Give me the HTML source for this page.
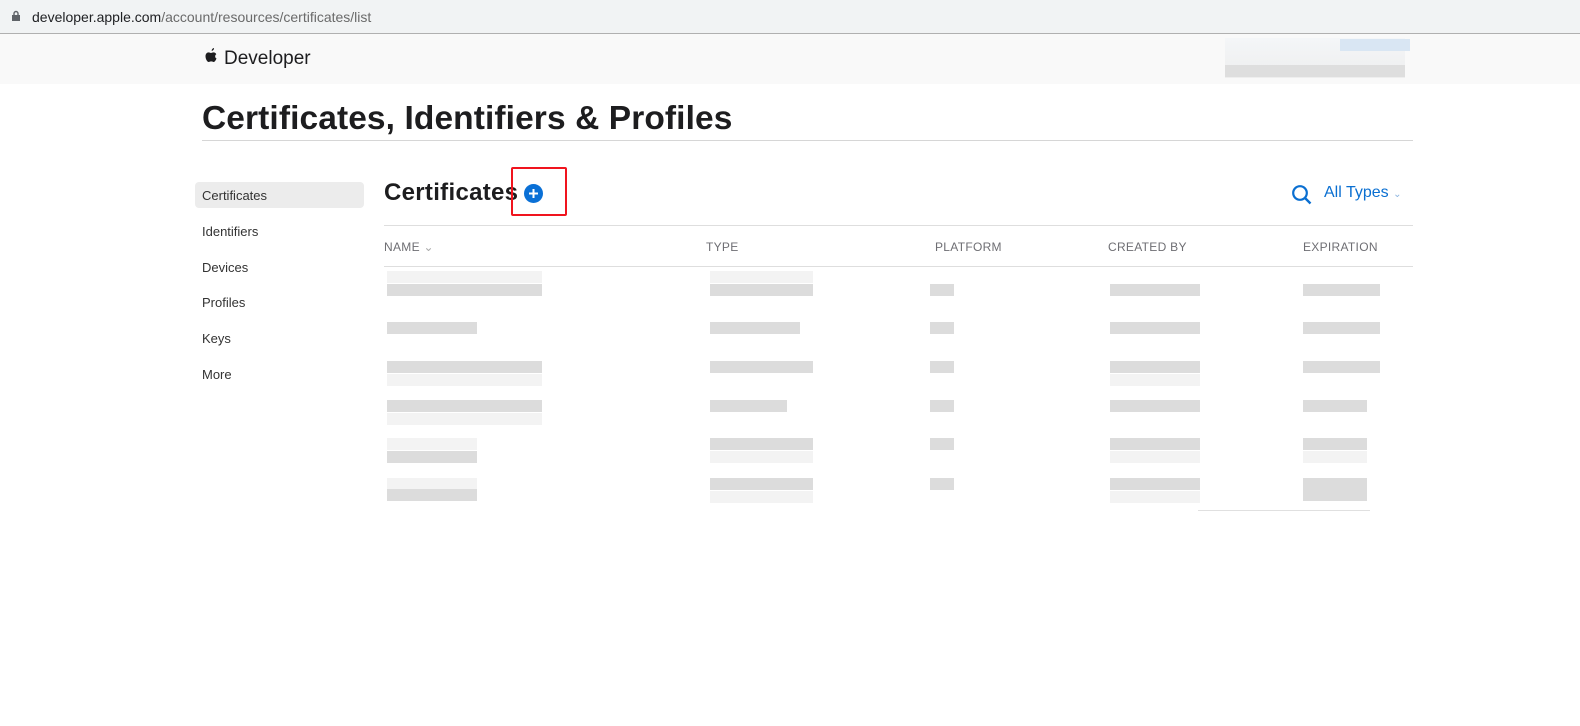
<!DOCTYPE html>
<html><head><style>
body{margin:0;width:1580px;height:726px;background:#fff;font-family:"Liberation Sans",sans-serif;position:relative;overflow:hidden}
.a{position:absolute}
.bar{position:absolute;height:12px;background:#dcdcdc}
.bar2{position:absolute;height:12px;background:#f3f3f3}
.hd{position:absolute;top:240px;font-size:12px;color:#6e6e73;letter-spacing:.3px}
.sb{position:absolute;left:202px;font-size:13px;color:#333}
</style></head><body>
<div class="a" style="left:0;top:0;width:1580px;height:33px;background:#f1f3f4"></div>
<div class="a" style="left:0;top:33px;width:1580px;height:1px;background:#b0b0b0"></div>
<svg class="a" style="left:11px;top:10px" width="10" height="12"><rect x="1" y="5" width="8" height="6" fill="#5f6368"/><path d="M3 5V3.5a2 2 0 0 1 4 0V5" stroke="#5f6368" stroke-width="1.4" fill="none"/></svg>
<div class="a" style="left:32px;top:9px;font-size:14px;color:#202124">developer.apple.com<span style="color:#6a6a6a">/account/resources/certificates/list</span></div>
<div class="a" style="left:0;top:34px;width:1580px;height:50px;background:#f9f9f9"></div>
<div class="a" style="left:1225px;top:38px;width:180px;height:40px;background:linear-gradient(#f4f6f8,#eee)"></div>
<div class="a" style="left:1225px;top:65px;width:180px;height:12px;background:#dedede"></div>
<div class="a" style="left:1340px;top:39px;width:70px;height:12px;background:#d9e6f3"></div>
<svg class="a" style="left:203px;top:46px" width="16" height="18" viewBox="0 0 16 18"><path d="M11 0c.2 1.3-.9 2.8-2.3 2.9C8.5 1.6 9.7.2 11 0zM13.3 6.2c-1.5.9-1.6 3.4.2 4.2-.4 1.3-1.6 3.6-2.8 3.6-.9 0-1.3-.6-2.5-.6s-1.6.6-2.5.6C4.2 14 2.5 11 2.5 8.3c0-2.4 1.5-3.9 3-3.9 1 0 1.8.6 2.5.6.6 0 1.6-.7 2.8-.6.6 0 1.7.3 2.5 1.8z" fill="#1d1d1f" transform="translate(0,2)"/></svg>
<div class="a" style="left:224px;top:48px;font-size:19px;color:#1d1d1f">Developer</div>
<div class="a" style="left:202px;top:100px;font-size:33.5px;font-weight:bold;color:#1d1d1f;letter-spacing:0.1px">Certificates, Identifiers &amp; Profiles</div>
<div class="a" style="left:202px;top:140px;width:1211px;height:1px;background:#d6d6d6"></div>
<div class="a" style="left:195px;top:182px;width:169px;height:26px;background:#ececec;border-radius:4px"></div>
<div class="sb" style="top:188px">Certificates</div>
<div class="sb" style="top:224px">Identifiers</div>
<div class="sb" style="top:260px">Devices</div>
<div class="sb" style="top:295px">Profiles</div>
<div class="sb" style="top:331px">Keys</div>
<div class="sb" style="top:367px">More</div>
<div class="a" style="left:384px;top:179px;font-size:24px;font-weight:bold;color:#1d1d1f;letter-spacing:0.3px">Certificates</div>
<svg class="a" style="left:524px;top:184px" width="19" height="19"><circle cx="9.5" cy="9.5" r="9.5" fill="#0a70d6"/><path d="M9.5 5v9M5 9.5h9" stroke="#fff" stroke-width="2"/></svg>
<div class="a" style="left:511px;top:167px;width:52px;height:45px;border:2px solid #f0141e;border-radius:2px"></div>
<svg class="a" style="left:1291px;top:184px" width="22" height="22"><circle cx="9" cy="9" r="6.8" stroke="#0a6fd1" stroke-width="2.2" fill="none"/><path d="M14 14l5.5 5.5" stroke="#0a6fd1" stroke-width="2.4"/></svg>
<div class="a" style="left:1324px;top:184px;font-size:16px;color:#0a6fd1">All Types <span style="font-size:10px;color:#8ab3df">&#8964;</span></div>
<div class="a" style="left:384px;top:225px;width:1029px;height:1px;background:#dedede"></div>
<div class="hd" style="left:384px">NAME <span style="color:#aaa">&#8964;</span></div>
<div class="hd" style="left:706px">TYPE</div>
<div class="hd" style="left:935px">PLATFORM</div>
<div class="hd" style="left:1108px">CREATED BY</div>
<div class="hd" style="left:1303px">EXPIRATION</div>
<div class="a" style="left:384px;top:266px;width:1029px;height:1px;background:#dedede"></div>
<div class="a" style="left:1198px;top:510px;width:172px;height:1px;background:#e0e0e0"></div>

<div class="bar2" style="left:387px;top:271px;width:155px"></div><div class="bar" style="left:387px;top:284px;width:155px"></div>
<div class="bar2" style="left:710px;top:271px;width:103px"></div><div class="bar" style="left:710px;top:284px;width:103px"></div>
<div class="bar" style="left:930px;top:284px;width:24px"></div><div class="bar" style="left:1110px;top:284px;width:90px"></div><div class="bar" style="left:1303px;top:284px;width:77px"></div>

<div class="bar" style="left:387px;top:322px;width:90px"></div><div class="bar" style="left:710px;top:322px;width:90px"></div>
<div class="bar" style="left:930px;top:322px;width:24px"></div><div class="bar" style="left:1110px;top:322px;width:90px"></div><div class="bar" style="left:1303px;top:322px;width:77px"></div>

<div class="bar" style="left:387px;top:361px;width:155px"></div><div class="bar" style="left:710px;top:361px;width:103px"></div>
<div class="bar" style="left:930px;top:361px;width:24px"></div><div class="bar" style="left:1110px;top:361px;width:90px"></div><div class="bar" style="left:1303px;top:361px;width:77px"></div>
<div class="bar2" style="left:387px;top:374px;width:155px"></div><div class="bar2" style="left:1110px;top:374px;width:90px"></div>

<div class="bar" style="left:387px;top:400px;width:155px"></div><div class="bar" style="left:710px;top:400px;width:77px"></div>
<div class="bar" style="left:930px;top:400px;width:24px"></div><div class="bar" style="left:1110px;top:400px;width:90px"></div><div class="bar" style="left:1303px;top:400px;width:64px"></div>
<div class="bar2" style="left:387px;top:413px;width:155px"></div>

<div class="bar2" style="left:387px;top:438px;width:90px"></div><div class="bar" style="left:387px;top:451px;width:90px"></div>
<div class="bar" style="left:710px;top:438px;width:103px"></div><div class="bar2" style="left:710px;top:451px;width:103px"></div>
<div class="bar" style="left:930px;top:438px;width:24px"></div><div class="bar" style="left:1110px;top:438px;width:90px"></div><div class="bar" style="left:1303px;top:438px;width:64px"></div>
<div class="bar2" style="left:1110px;top:451px;width:90px"></div><div class="bar2" style="left:1303px;top:451px;width:64px"></div>

<div class="bar2" style="left:387px;top:478px;width:90px"></div><div class="bar" style="left:387px;top:489px;width:90px"></div>
<div class="bar" style="left:710px;top:478px;width:103px"></div><div class="bar2" style="left:710px;top:491px;width:103px"></div>
<div class="bar" style="left:930px;top:478px;width:24px"></div><div class="bar" style="left:1110px;top:478px;width:90px"></div><div class="bar" style="left:1303px;top:478px;width:64px"></div>
<div class="bar2" style="left:1110px;top:491px;width:90px"></div><div class="bar" style="left:1303px;top:489px;width:64px"></div>
</body></html>
